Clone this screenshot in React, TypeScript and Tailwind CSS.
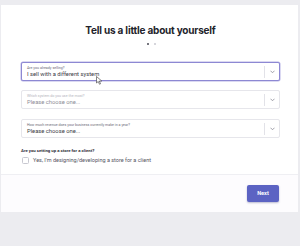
import React from "react";

function Chevron() {
  return (
    <svg width="5" height="4" viewBox="0 0 10 8" className="block">
      <path d="M1.5 2 L5 5.5 L8.5 2" fill="none" stroke="#8a8a95" strokeWidth="1.6" strokeLinecap="round" strokeLinejoin="round" />
    </svg>
  );
}

function Select({
  label,
  value,
  active,
  muted,
  className,
}: {
  label: string;
  value: string;
  active?: boolean;
  muted?: boolean;
  className?: string;
}) {
  return (
    <div
      className={
        "relative flex h-[19px] items-stretch rounded-[2px] border bg-white " +
        (active ? "border-[#8d88d3] shadow-[0_0_0_0.5px_#b7b3e6] " : "border-[#e6e6eb] ") +
        (className ?? "")
      }
    >
      <div className="flex flex-1 flex-col justify-center pl-[5px]">
        <div className={"text-[3.6px] leading-[5px] " + (muted ? "text-[#b4b4bc]" : "text-[#6b6b76]")}>{label}</div>
        <div className={"text-[5.8px] leading-[7px] " + (muted ? "text-[#8d8d97]" : "text-[#3a3a44]")}>{value}</div>
      </div>
      <div className="flex items-center">
        <div className="h-[12px] w-px bg-[#e2e2e8]" />
        <div className="flex w-[14px] items-center justify-center">
          <Chevron />
        </div>
      </div>
    </div>
  );
}

export default function App() {
  return (
    <div
      className="relative h-[246px] w-[300px] overflow-hidden bg-[#ececf0] pl-[1px] pt-[5px]"
      style={{ fontFamily: "Roboto, 'Liberation Sans', sans-serif" }}
    >
      <div className="flex w-[297px] flex-col bg-white">
        <div className="flex flex-col pl-[20px] pr-[18px] pt-[18px]">
          <h1
            className="text-center text-[10px] font-bold leading-[14px] tracking-[-0.2px] text-[#23232b]"
            style={{ fontFamily: "Inter, 'Noto Sans', sans-serif" }}
          >
            Tell us a little about yourself
          </h1>
          <div className="mt-[6px] flex justify-center gap-[5px] pl-[1px]">
            <div className="h-[2px] w-[2px] rounded-full bg-[#4a4a55]" />
            <div className="h-[2px] w-[2px] rounded-full bg-[#c9c9d1]" />
          </div>
          <Select
            className="mt-[17px]"
            active
            label="Are you already selling?"
            value="I sell with a different system"
          />
          <Select
            className="mt-[9px]"
            muted
            label="Which system do you use the most?"
            value="Please choose one..."
          />
          <Select
            className="mt-[10px]"
            label="How much revenue does your business currently make in a year?"
            value="Please choose one..."
          />
          <div className="mt-[10px] text-[4.3px] font-bold leading-[6px] text-[#33333d]">
            Are you setting up a store for a client?
          </div>
          <div className="mt-[3px] flex items-center gap-[4px] pl-[1px]">
            <div className="h-[7px] w-[7px] rounded-[1.5px] border border-[#c8c8d0] bg-white" />
            <span className="text-[5.5px] leading-[7px] text-[#55555f]">
              Yes, I&apos;m designing/developing a store for a client
            </span>
          </div>
        </div>
        <div className="mt-[10px] flex justify-end border-t border-[#efeff3] bg-[#fdfcfe] pb-[10px] pr-[19px] pt-[10px]">
          <button className="h-[17px] w-[32px] rounded-[2px] bg-[#5c63c3] text-[5.5px] font-bold text-white shadow-[0_1px_2px_rgba(60,60,120,0.35)]">
            Next
          </button>
        </div>
      </div>
      <svg
        className="absolute left-[96px] top-[76px]"
        width="7"
        height="9"
        viewBox="0 0 14 18"
      >
        <path d="M1 1 L1 14 L4.5 11 L7 16.5 L9 15.5 L6.7 10.2 L11.5 10 Z" fill="#fff" stroke="#333" strokeWidth="1.2" strokeLinejoin="round" />
      </svg>
    </div>
  );
}
